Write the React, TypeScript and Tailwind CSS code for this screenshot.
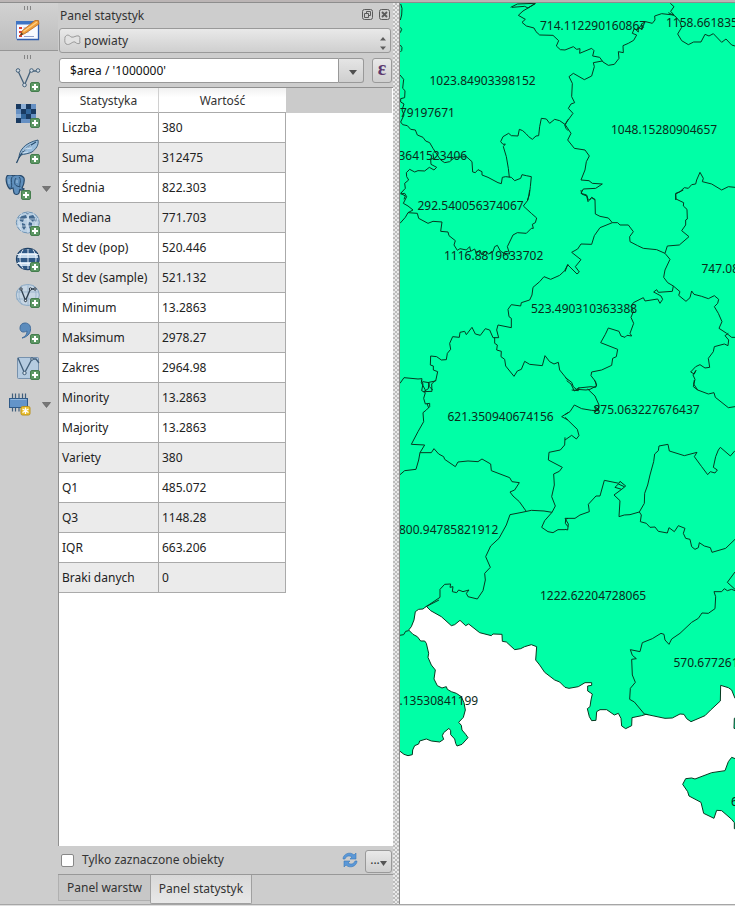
import React from "react";

const rows: [string, string][] = [
  ["Liczba", "380"],
  ["Suma", "312475"],
  ["Średnia", "822.303"],
  ["Mediana", "771.703"],
  ["St dev (pop)", "520.446"],
  ["St dev (sample)", "521.132"],
  ["Minimum", "13.2863"],
  ["Maksimum", "2978.27"],
  ["Zakres", "2964.98"],
  ["Minority", "13.2863"],
  ["Majority", "13.2863"],
  ["Variety", "380"],
  ["Q1", "485.072"],
  ["Q3", "1148.28"],
  ["IQR", "663.206"],
  ["Braki danych", "0"],
];

const labels: [number, number, string][] = [
  [540, 30, "714.112290160867"],
  [666, 27, "1158.661835"],
  [429.5, 84.5, "1023.84903398152"],
  [400, 116.5, "79197671"],
  [611, 133.5, "1048.15280904657"],
  [398.5, 160, "3641523406"],
  [417.5, 209.5, "292.540056374067"],
  [444, 260, "1116.8819633702"],
  [701.5, 272.5, "747.08"],
  [531, 313, "523.490310363388"],
  [447.5, 421, "621.350940674156"],
  [593.5, 413.5, "875.063227676437"],
  [399, 534, "800.94785821912"],
  [540, 600, "1222.62204728065"],
  [673.5, 667, "570.677261"],
  [399.5, 705, ".13530841199"],
  [731, 805.5, "6"],
];

// County borders, one group per map tile; units are thirds of a pixel.
const tiles: { x: number; y: number; d: string }[] = [
  {
    x: 398,
    y: 0,
    d: "M8,12 L12,25 L11,45 L7,60 M7,82 L11,88 L7,98 M7,135 L12,143 L11,152 L7,156 M6,225 L17,238 L14,265 L21,272 L20,293 L8,296 L8,306 L18,312 L12,330 L18,345 L8,366 L14,374 L28,377 L38,388 L52,390 L58,405 L75,412 L83,423 L95,428 L105,445 L118,465 L128,480 L140,488 L155,485 L170,472 L205,470 L222,485 L224,516 L232,518 L240,509 L252,515 L252,525 L270,532 L300,548 L310,551 L313,532 L323,530 L340,532 L350,542 L368,535 L372,524 L385,527 L400,530 L397,560 L394,585 L388,600 M105,460 L107,475 L98,478 L99,493 L116,502 L108,510 L94,502 L80,513 L60,512 L50,516 L35,508 L25,518 L26,530 L32,540 L20,550 L22,565 L8,580 L22,588 L18,598 M334,532 L331,505 L325,470 L316,440 L322,432 L315,433 L308,425 L315,410 L332,400 L340,407 L360,408 L364,388 L374,392 L385,402 L392,410 L403,418 L414,408 L422,407 L425,380 L430,355 L445,357 L455,370 L470,358 L485,362 L502,374 L510,358 M500,375 L504,385 L510,392 M338,22 L358,12 L412,10 L390,24 L380,19 L342,22 M412,11 L375,33 L361,46 L382,58 L372,67 L385,78 L408,84 L414,95 L425,105 L465,106 L482,122 L475,138 L487,149 L501,150",
  },
  {
    x: 565,
    y: 0,
    d: "M0,150 L25,140 L35,148 L45,146 L44,160 L80,145 L87,152 L83,168 L104,172 L114,186 L130,196 L148,193 L162,175 L160,155 L175,158 L174,137 L190,130 L206,121 L215,105 L202,100 L208,85 L220,96 L219,83 L232,87 L229,72 L242,65 L262,70 L270,60 L269,48 L290,41 L325,45 M316,10 L327,20 L317,34 L327,45 M218,90 L230,74 L236,83 M310,38 L330,48 L345,65 L350,82 L338,102 L350,122 L370,134 L386,126 L408,126 L420,103 L432,108 L445,101 L470,127 L483,117 L500,135 L510,138 M112,183 L85,188 L88,200 L80,228 L58,239 L25,220 L12,230 L22,250 L20,290 L29,308 L18,312 L10,325 L24,340 L8,362 L0,373 L18,400 L8,420 L28,445 L60,450 L73,468 L64,485 L60,510 L48,540 L72,542 L82,550 L112,552 L92,565 L55,567 L48,580 L65,585 L70,600 M74,600 L80,593 L90,600 M332,600 L332,580 L345,575 L358,563 L370,565 L380,554 L392,552 L395,540 L405,517 L415,535 L412,545 L440,552 L470,570 L490,560 L510,562",
  },
  {
    x: 398,
    y: 190,
    d: "M8,12 L20,10 L26,20 L16,40 L30,48 L45,60 L30,68 L22,82 L6,100 M30,68 L58,70 L62,85 L90,100 L105,94 L132,96 L128,124 L150,126 L153,137 L172,152 L168,165 L178,181 L186,176 L205,180 L215,170 L218,184 L230,177 L235,190 L245,180 L252,195 L262,184 L272,192 L285,185 L290,170 L298,166 L307,183 L318,190 L335,192 L328,170 L345,135 L358,128 L385,130 L400,115 L406,115 L403,103 L412,98 L416,84 L400,70 L376,48 L390,30 L395,0 M510,223 L500,242 L485,256 L458,268 L438,260 L425,275 L405,292 L402,315 L395,330 L370,338 L368,348 L340,344 L330,358 L333,380 L340,385 L340,413 L300,405 L296,420 L302,443 L285,443 L275,420 L262,416 L247,436 L232,432 L222,412 L205,434 L200,424 L186,427 L184,442 L164,440 L155,460 L158,478 L148,490 L145,509 L130,510 L116,500 L98,498 L97,525 L106,528 L106,540 L119,545 L113,573 L92,577 L94,590 L104,600 M290,443 L290,460 L298,465 L296,480 L310,484 L309,500 L320,508 L323,528 L348,559 L358,543 L370,538 L380,514 L395,523 L433,527 L441,497 L455,515 L468,522 L481,517 L485,540 L510,571 M6,580 L18,563 L60,567 L72,566 L70,578 L82,600",
  },
  {
    x: 565,
    y: 190,
    d: "M48,0 L50,12 L65,18 L69,35 L80,22 L90,28 L91,72 L105,79 L130,84 L142,98 L158,98 L165,105 L190,105 L205,125 L194,140 L195,155 L218,167 L235,175 L275,179 L300,190 L315,208 L300,240 L296,262 L308,278 L325,288 L345,305 L341,316 L363,334 L375,323 L380,303 L387,313 L410,319 L430,326 L448,317 L461,328 L458,340 L448,350 L460,370 L471,395 L462,415 L485,430 L500,442 L510,442 M142,98 L105,113 L88,137 L80,163 L48,162 L38,177 L20,187 L48,209 L31,230 L43,246 L36,252 L8,224 L0,245 M300,190 L307,168 L343,165 L372,140 L350,122 L362,105 L362,90 L367,87 L366,58 L355,48 L356,38 L333,27 L332,12 L355,0 M325,288 L322,304 L280,307 L275,299 L266,306 L288,318 L293,328 L285,340 L278,327 L240,333 L235,323 L205,338 L198,350 L205,365 L198,382 L206,400 L195,430 L200,438 L186,436 L180,442 L168,438 L162,424 L130,414 L121,433 L107,458 L158,478 L154,500 L143,505 L140,526 L110,540 L80,546 L78,557 L92,575 L94,588 L75,598 L63,600 M0,562 L20,577 L25,590 L34,598 L63,600 M490,430 L480,437 L491,450 L489,467 L478,462 L448,470 L445,485 L430,505 L434,532 L420,534 L405,524 L392,530 L377,546 L388,552 L393,541 L384,555 L390,568 L385,590 L398,600",
  },
  {
    x: 398,
    y: 380,
    d: "M70,0 L75,12 L71,32 L82,38 L77,55 L82,72 L95,70 L95,80 L85,90 L75,98 L77,125 L60,155 L40,193 L80,195 L66,218 L100,218 L108,206 L122,222 L137,230 L140,238 L172,260 L180,246 L210,243 L240,245 L252,237 L278,252 L280,272 L335,293 L342,305 L364,308 L350,330 L336,336 L345,348 L364,365 L384,393 M75,5 L93,8 L91,26 L77,35 L102,34 L101,12 L113,0 M87,70 L92,84 M66,218 L62,240 L54,268 L20,272 L5,285 M501,172 L500,195 L487,210 L453,217 L451,240 L493,262 L484,274 L467,282 L469,315 L461,350 L472,378 L462,397 L438,393 L400,391 L372,397 L336,404 L325,435 L303,475 L278,498 L263,530 L277,562 L260,580 L262,600 L255,632 L238,657 L210,650 L205,640 L213,630 L195,635 L182,630 L176,638 L163,635 L165,620 L156,622 L158,612 L140,613 L126,628 L126,652 L83,681 M462,397 L440,422 L431,442 L450,455 L465,458 L480,449 L501,449 M510,98 L491,110 L510,120 M510,415 L503,418 L502,430 L510,440",
  },
  {
    x: 565,
    y: 380,
    d: "M5,2 L18,12 L28,33 L40,24 L78,20 L92,22 L95,15 L88,0 M20,30 L40,32 L42,22 M68,27 L90,48 L102,75 L100,92 L80,91 L50,86 L28,75 L15,95 L0,104 M88,80 L100,87 L90,96 M0,112 L37,148 L42,167 L34,177 L20,166 L0,180 M0,415 L30,415 L45,405 L73,395 L70,373 L93,348 L105,348 L118,301 L162,310 L165,304 L182,318 L170,328 L150,322 L160,312 L178,320 M170,328 L147,345 L165,362 L162,410 L178,405 L195,404 L223,396 L238,370 L239,340 L248,315 L255,285 L266,245 L269,222 L280,212 L282,198 L309,193 L313,213 L358,227 L396,217 L388,230 L410,260 L428,284 L436,275 L450,279 L457,270 L445,262 L452,230 L460,210 L466,202 L496,228 L510,212 M223,396 L229,405 L226,425 L244,430 L255,442 L270,441 L280,454 L307,459 L312,443 L328,455 L340,437 L360,445 L355,460 L362,475 L375,478 L380,500 L390,508 L400,503 L403,488 L418,498 L436,503 L441,517 L482,505 L510,478 M0,415 L10,432 L8,450 L0,448 M388,0 L386,12 L398,30 L430,42 L447,38 L451,52 L490,83 L510,80 M510,576 L487,607 L510,628 M510,632 L500,628 L487,632 L478,626 L470,635 L447,635 L452,650 L450,686",
  },
  {
    x: 565,
    y: 600,
    d: "M450,26 L430,40 L411,39 L400,55 L380,67 L345,100 L320,117 L312,133 L300,120 L297,103 L288,100 L262,116 L232,128 L225,155 L196,149 L202,166 L214,176 L200,178 L202,225 L211,247 L196,265 L194,298 L208,306 L238,342 L250,344",
  },
  { x: 398, y: 600, d: "M5,106 L17,104 L23,94 L32,92 M84,20 L123,0" },
];

// State boundary: everything south of it lies outside the layer.
const COAST_WEST =
  "M5,453 L18,463 L30,467 L43,464 L44,450 L50,437 L62,432 L65,423 L85,417 L100,423 L125,426 L137,418 L133,407 L137,398 L153,385 L158,392 L158,404 L170,417 L173,430 L177,438 L192,433 L210,413 L203,403 L192,390 L190,376 L182,367 L196,352 L202,330 L198,308 L190,290 L175,280 L160,275 L148,268 L145,260 L132,264 L118,257 L108,237 L112,210 L100,195 L90,172 L92,160 L85,130 L80,123 L68,123 L58,110 L45,103 L32,90 L40,80 L48,60 L52,35 L62,28 L75,27 L85,19 L98,32 L130,50 L160,77 L170,74 L186,61 L203,77 L212,72 L245,98 L280,107 L285,102 L312,103 L313,124 L325,126 L350,149 L368,146 L380,140 L400,134 L416,140 L413,180 L425,195 L440,217 L470,240 L485,246 L501,262";
const COAST_EAST =
  "M0,262 L12,265 L40,260 L60,248 L80,248 L80,256 L68,258 L68,273 L82,282 L78,300 L75,320 L67,326 L73,350 L80,362 L93,361 L95,335 L105,329 L125,329 L148,345 L160,340 L168,355 L170,378 L182,386 L200,377 L201,353 L230,347 L243,343 L300,355 L322,354 L345,342 L357,343 L365,356 L378,365 L420,347 L437,330 L466,303 L467,256 L490,263 L500,270 L510,295";
const ENCLAVE =
  "M516,478 L500,472 L490,485 L480,512 L440,518 L390,537 L380,534 L362,536 L353,553 L368,575 L372,588 L408,607 L416,640 L447,655 L455,631 L470,632 L500,658 L508,668 L508,686 L516,686 Z M516,350 L508,355 L507,385 L516,386 Z";

function CountyMap() {
  return (
    <svg
      className="block h-[901px] w-[335px]"
      viewBox="400 3 335 901"
      fill="none"
      stroke="#06371f"
      strokeLinejoin="round"
    >
      <rect x="400" y="3" width="335" height="901" fill="#00ffa6" stroke="none" />
      <g transform="translate(398 600) scale(.333333)">
        <path d={COAST_WEST + " V915 H5 Z"} fill="#fff" stroke="none" />
        <path d={COAST_WEST} strokeWidth="3" />
      </g>
      <g transform="translate(565 600) scale(.333333)">
        <path d={COAST_EAST + " V915 H0 Z"} fill="#fff" stroke="none" />
        <path d={COAST_EAST} strokeWidth="3" />
        <path d={ENCLAVE} fill="#00ffa6" strokeWidth="3" />
      </g>
      {tiles.map((t, i) => (
        <g key={i} transform={`translate(${t.x} ${t.y}) scale(.333333)`}>
          <path d={t.d} strokeWidth="3" />
        </g>
      ))}
      <g fill="#0b2a1a" stroke="none" className="text-[12px]">
        {labels.map(([x, y, s]) => (
          <text key={s} x={x} y={y}>
            {s}
          </text>
        ))}
      </g>
    </svg>
  );
}

function Plus({ x = 15, y = 15 }: { x?: number; y?: number }) {
  return (
    <g transform={`translate(${x} ${y})`}>
      <rect x=".5" y=".5" width="9" height="9" rx="1.5" fill="#5d9864" stroke="#457d4e" strokeWidth="1" />
      <path d="M5 2v6M2 5h6" stroke="#fff" strokeWidth="2" />
    </g>
  );
}

function Tool({ children, menu }: { children: React.ReactNode; menu?: boolean }) {
  return (
    <div className="flex h-9 w-full shrink-0 items-center">
      <svg className={menu ? "ml-[5px] h-[26px] w-[34px]" : "ml-[15px] h-[26px] w-[26px]"} viewBox={menu ? "0 0 34 26" : "0 0 26 26"} fill="none">
        {children}
      </svg>
      {menu && (
        <svg className="ml-[3px] mt-[2px] h-[6px] w-[9px]" viewBox="0 0 9 6">
          <path d="M.5 .5h8L4.500 5.500z" fill="#777" stroke="#555" strokeWidth=".6" />
        </svg>
      )}
    </div>
  );
}

function Grip() {
  return (
    <svg className="mx-auto block h-[4px] w-[8px]" viewBox="0 0 8 4">
      <path d="M.5 0v4M3.5 0v4M6.5 0v4" stroke="#858585" />
    </svg>
  );
}

function Toolbar() {
  return (
    <div className="flex w-[58px] shrink-0 flex-col bg-[#cdcdcd]">
      <div className="h-[48px] shrink-0 border-b border-[#969696] bg-gradient-to-b from-[#d2d2d2] to-[#bdbdbd] pt-[3px]">
        <div className="pr-[3px]"><Grip /></div>
        <svg className="mt-[9px] ml-[15px] block h-[24px] w-[26px]" viewBox="0 0 26 24" fill="none">
          <rect x="1.500" y="2.500" width="22" height="18" rx="1" fill="#f7f9ff" stroke="#5d86c8" />
          <path d="M1 2h23v3.500H1z" fill="#3f74c4" />
          <path d="M4 9h3M4 13h3M4 17h3" stroke="#dd3d36" strokeWidth="2" />
          <path d="M8.500 9h8M8.500 13h5M9 17.500h10" stroke="#8f9fcc" />
          <path d="M23.500 5v15.500H2" stroke="#2f5db0" strokeWidth="1.300" />
          <path d="M5 16.500l2.500-5L20 1.500h3.500L24 5 10 14.500z" fill="#f0a03c" stroke="#b96820" strokeWidth=".8" />
          <path d="M8.500 12.500L22 3" stroke="#ffcf85" strokeWidth="1.300" />
          <path d="M5 16.500l1.600-3 1.700 1.700z" fill="#493727" />
        </svg>
      </div>
      <div className="pt-[4px] pr-[3px]"><Grip /></div>
      <div className="flex flex-col pt-[3px]">
        <Tool>
          <path d="M3 4l6.500 14L15.500 4H23" stroke="#45617a" strokeWidth="1.300" />
          <g fill="#d5dde4" stroke="#45617a"><circle cx="3" cy="3.500" r="1.800" /><circle cx="9.500" cy="18" r="1.800" /><circle cx="16.500" cy="3.500" r="1.800" /><circle cx="23" cy="3.500" r="1.800" /></g>
          <Plus />
        </Tool>
        <Tool>
          <path d="M1 1h20v19H1z" fill="#6690c3" />
          <path d="M1 1h5v5H1zM11 1h5v5h-5zM6 6h5v5H6zM16 6h5v5h-5zM11 11h5v5h-5zM1 15h5v5H1z" fill="#193a61" />
          <path d="M6 1h5v5H6zM1 11h5v4H1z" fill="#8dafd6" />
          <path d="M11 6h5v5h-5zM6 11h5v5H6z" fill="#32669b" />
          <Plus />
        </Tool>
        <Tool>
          <path d="M4 19c0-7 5-15 19-18 1 5-2 9-6 12-4 2-8 2-11 3z" fill="#9bbedc" stroke="#365b7c" />
          <path d="M1.500 24C5 14 11 8 21 3" stroke="#264b6c" strokeWidth="1.300" />
          <path d="M7 14l6-1M10 10l7-1M8 12l8-6" stroke="#d9e9f6" strokeWidth=".8" />
          <Plus />
        </Tool>
        <Tool menu>
          <path d="M8 1c4-2 9-1 11 2 1 5-1 8-2 10l2 1c-2 2-4 1-4 0l-1 4c-1 2-4 2-5 0l-1-5-3 1C2 12 0 4 2 1c2-2 5-1 6 0z" fill="#5f8fbc" stroke="#27496b" strokeWidth="1.200" />
          <path d="M7 2C5 6 8 9 6 13M14 2c3 3 0 7 1 10l-3-1c-3-1-3-5-1-8" stroke="#294d70" />
          <path d="M4 4v5M12 5v3" stroke="#9dc0df" />
          <Plus x={16} y={15} />
        </Tool>
        <Tool>
          <ellipse cx="12.800" cy="11.500" rx="11.500" ry="10.500" fill="#b8cee2" stroke="#6f94b5" />
          <path d="M3 7l4-2 4-1 1 3-3 1-1 3-3-1zM7 12l3 1 1 3-2 3-2-3zM14 5l4-1 4 4-1 3-2-2-1 2-2-2-2-1zM14 11l3 1 0 4-2 2-2-4zM11 2l3 0-1 2z" fill="#42688e" />
          <path d="M1 8h23M1 15h23M13 1v21M7 2c-4 6-4 12 0 19M18 2c4 6 4 12 0 19" stroke="#dde9f3" strokeWidth=".7" />
          <Plus />
        </Tool>
        <Tool>
          <ellipse cx="12.800" cy="12" rx="11.300" ry="10.500" fill="#c3d7ea" stroke="#1f4166" strokeWidth="1.300" />
          <path d="M4 6c5-5 13-5 18 0zM2 11h22l-.5 4h-21zM4 19h17c-5 4-12 5-17 0z" fill="#2f5885" />
          <path d="M2 7.500h21.500M2 16.500h21.500M13 2v20M8 2.500c-4 6-4 13 0 19M18 2.500c4 6 4 13 0 19" stroke="#eef4fa" strokeWidth=".9" />
          <Plus />
        </Tool>
        <Tool>
          <ellipse cx="12.800" cy="12" rx="11.500" ry="10.500" fill="#c7d6e4" stroke="#8aa9c4" />
          <path d="M1 9h23M1 16h23M13 2v20M7 2c-4 6-4 13 0 20M18 2c4 6 4 13 0 20" stroke="#91adc7" strokeWidth=".7" />
          <path d="M6 6l4.500 11.500L15.500 6H20" stroke="#2e3f4f" strokeWidth="1.300" />
          <g fill="#e8eef4" stroke="#263440"><circle cx="6" cy="6" r="1.200" /><circle cx="10.500" cy="17.500" r="1.200" /><circle cx="15.500" cy="6" r="1.200" /><circle cx="20" cy="6" r="1.200" /></g>
          <Plus />
        </Tool>
        <Tool>
          <path d="M7 19c4-2 5-4 5-7-4 2-7 1-7-3 0-3 2-5 5-5 4 0 6 3 5.500 7C15 15 12 18 7 19z" fill="#5c8cbd" stroke="#426d9c" />
          <Plus />
        </Tool>
        <Tool>
          <rect x="2.500" y="2.500" width="21" height="21" rx="1" fill="#b5cbe0" stroke="#7691ad" />
          <path d="M3 3l6.500 15L17 4l4 0 3 4" stroke="#405d78" strokeWidth="1.300" />
          <g fill="#dbe4eb" stroke="#405d78"><circle cx="9.500" cy="18" r="1.700" /><circle cx="17" cy="4" r="1.300" /></g>
          <Plus />
        </Tool>
        <Tool menu>
          <path d="M7.500 2.500v18M10.500 2.500v18M14 2.500v18M17.500 2.500v18M20.500 2.500v18" stroke="#405f7d" strokeWidth="1.200" />
          <rect x="4.500" y="7.500" width="18" height="9" fill="#6394c9" stroke="#2f5a88" />
          <path d="M5.500 8.500h16" stroke="#91b7dd" />
          <rect x="16" y="15.500" width="9" height="8.500" rx="1.500" fill="#ecc12c" stroke="#b9911c" />
          <path d="M20.500 16.500v6.500M17.500 18l6 3.500M17.500 21.500l6-3.500" stroke="#fff" strokeWidth="1.300" />
        </Tool>
      </div>
    </div>
  );
}

const raised = "border border-[#999] rounded-[3px] bg-gradient-to-b from-[#e9e9e9] to-[#cfcfcf]";

function StatisticsPanel() {
  return (
    <div className="flex w-[335px] shrink-0 flex-col bg-[#cdcdcd]">
      <div className="flex h-[25px] shrink-0 items-center pl-[2px] pr-[3px]">
        <span className="flex-1">Panel statystyk</span>
        <svg className="-mt-[2px] h-[12px] w-[28px]" viewBox="0 0 28 12" fill="none" stroke="#5b5b5b">
          <rect x=".5" y=".5" width="10" height="10" rx="2" />
          <path d="M4.500 4.500v-2h4v4h-2M2.500 4.500h4v4h-4z" />
          <rect x="17.500" y=".5" width="10" height="10" rx="2" />
          <path d="M20 3l5 5M25 3l-5 5" strokeWidth="1.800" />
        </svg>
      </div>
      <div className={`ml-px mr-[2px] flex h-[25px] shrink-0 items-center pl-[4px] pr-[4px] ${raised}`}>
        <svg className="-mt-[2px] h-[12px] w-[17px]" viewBox="0 0 17 12">
          <path d="M1 3c2-3 4-2 6 0 3 1 5-2 8-1 2 2 0 4 1 7-1 1-3 1-5-1-3-1-5 4-9 2C0 8 1 5 1 3z" fill="#e2e2e2" stroke="#999" />
        </svg>
        <span className="ml-[3px] flex-1">powiaty</span>
        <svg className="mt-[5px] h-[13px] w-[6px]" viewBox="0 0 6 13">
          <path d="M0 3.500L3 0l3 3.500zM0 9.500h6L3 13z" fill="#5d5d5d" />
        </svg>
      </div>
      <div className="ml-px mr-[1px] mt-[5px] flex h-[25px] shrink-0">
        <div className="flex w-[280px] items-center rounded-l-[3px] border border-[#999] bg-white pl-[10px] text-[#111]">$area / '1000000'</div>
        <div className="flex w-[25px] items-center justify-center rounded-r-[3px] border border-l-0 border-[#999] bg-gradient-to-b from-[#e5e5e5] to-[#cfcfcf] pl-[3px]">
          <svg className="mt-[3px] h-[5px] w-[8px]" viewBox="0 0 8 5"><path d="M0 0h8L4 5z" fill="#4f4f4f" /></svg>
        </div>
        <div className={`ml-[8px] flex w-[20px] items-center justify-center font-['Liberation_Serif',serif] text-[20px] font-bold leading-none text-[#5c386e] ${raised}`}>
          <span className="-mt-[5px]">ε</span>
        </div>
      </div>
      <div className="mt-[4px] flex h-[759px] shrink-0 flex-col border-l border-t border-[#909090] bg-white">
        <div className="mr-[1px] flex h-[25px] shrink-0 bg-[#cbcbcb] text-center leading-[25px]">
          <div className="w-[100px] border-b border-r border-b-[#aaa] border-r-[#d0d0d0] bg-gradient-to-b from-[#f1f1f1] to-white to-40%">Statystyka</div>
          <div className="w-[127px] border-b border-b-[#aaa] bg-gradient-to-b from-[#f1f1f1] to-white to-40%">Wartość</div>
        </div>
        {rows.map(([name, value], i) => (
          <div key={name} className={`flex h-[30px] w-[227px] shrink-0 border-b border-r border-[#aaa] leading-[29px] text-[#222] ${i % 2 ? "bg-[#ebebeb]" : "bg-white"}`}>
            <div className="w-[100px] border-r border-[#aaa] pl-[3px]">{name}</div>
            <div className="pl-[3px]">{value}</div>
          </div>
        ))}
      </div>
      <div className="flex h-[28px] shrink-0 items-center pl-[3px] pr-[1px]">
        <div className="h-[13px] w-[13px] rounded-[2px] border border-[#888] bg-white" />
        <span className="ml-[8px] flex-1">Tylko zaznaczone obiekty</span>
        <svg className="mr-[7px] h-[16px] w-[16px]" viewBox="0 0 16 16">
          <path d="M1 7c0-5 7-8 11-4l2-2v6H8l2-2C7 3 4 4 3 7zM15 9c0 5-7 8-11 4l-2 2V9h6l-2 2c3 2 6 1 7-2z" fill="#5b98d8" stroke="#3978b8" strokeWidth=".6" />
        </svg>
        <div className={`mt-[2px] flex h-[23px] w-[27px] items-center justify-center ${raised}`}>
          <span className="-mt-[2px] leading-none">...</span>
          <svg className="mt-[5px] h-[5px] w-[7px]" viewBox="0 0 7 5"><path d="M0 0h7L3.500 5z" fill="#555" /></svg>
        </div>
      </div>
      <div className="flex h-[30px] shrink-0 items-start border-t border-[#989898]">
        <div className="h-[26px] w-[92px] border-b border-l border-[#b0b0b0] bg-[#c7c7c7] text-center leading-[25px]">Panel warstw</div>
        <div className="h-[29px] w-[102px] rounded-b-[2px] border border-t-0 border-[#a0a0a0] bg-gradient-to-b from-[#d8d8d8] to-[#e8e8e8] text-center leading-[27px]">Panel statystyk</div>
      </div>
    </div>
  );
}

export default function App() {
  return (
    <div className="flex h-[906px] w-[735px] flex-col overflow-hidden bg-[#cdcdcd] font-['Noto_Sans','Open_Sans',sans-serif] text-[12px] text-[#333]">
      <div className="h-[2px] shrink-0 bg-[#bbb5b5]" />
      <div className="h-px shrink-0 bg-[#8d8d8d]" />
      <div className="flex h-[901px] shrink-0">
        <Toolbar />
        <StatisticsPanel />
        <div className="w-[6px] shrink-0 bg-[#e9e9e9] bg-[conic-gradient(#bcbcbc_25%,transparent_0_50%,#bcbcbc_0_75%,transparent_0)] bg-[size:4px_4px]" />
        <div className="w-px shrink-0 bg-[#8b8b8b]" />
        <CountyMap />
      </div>
      <div className="h-px shrink-0 bg-[#a6a6a6]" />
      <div className="h-px shrink-0 bg-[#dedede]" />
    </div>
  );
}
